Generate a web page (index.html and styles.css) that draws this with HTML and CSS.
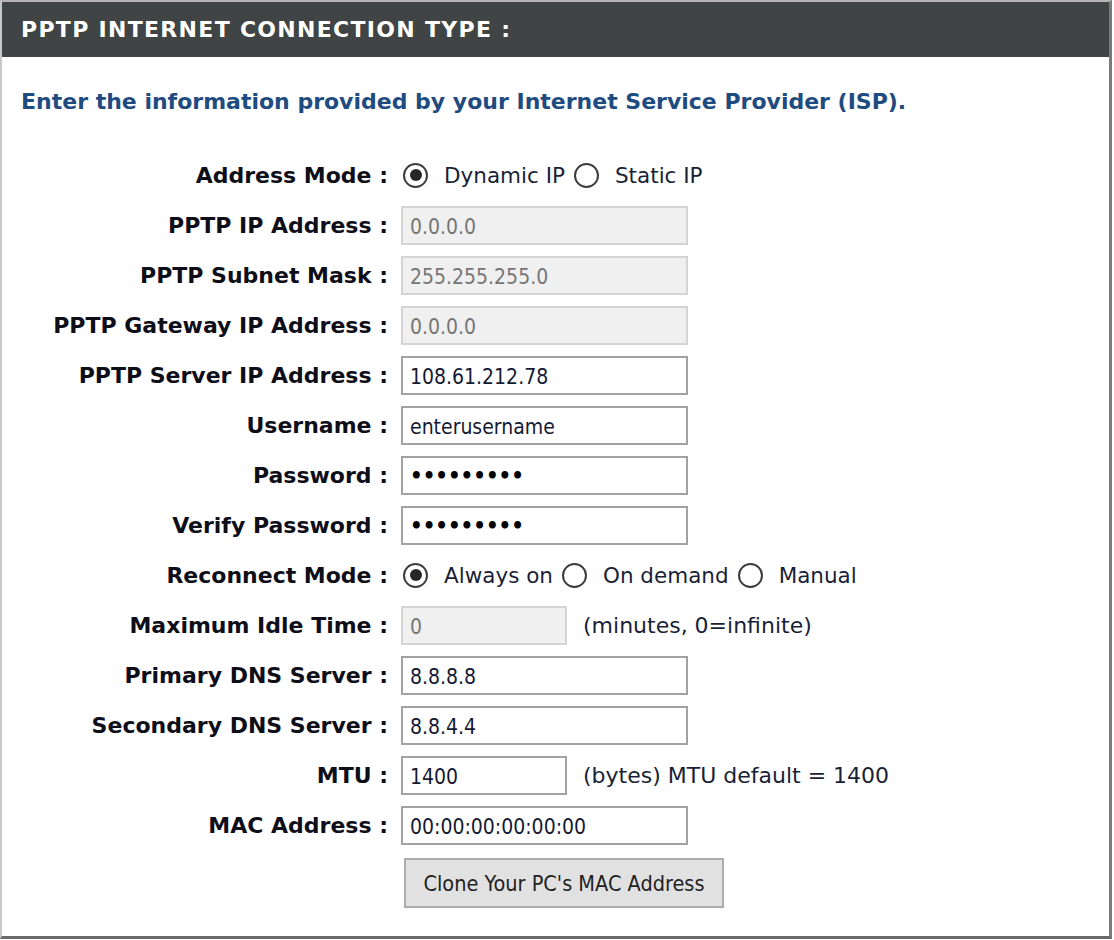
FILE: index.html
```html
<!DOCTYPE html>
<html>
<head>
<meta charset="utf-8">
<link rel="stylesheet" href="styles.css">
</head>
<body>
<div class="box">
  <div class="box-head">PPTP INTERNET CONNECTION TYPE :</div>
  <p class="intro">Enter the information provided by your Internet Service Provider (ISP).</p>
  <div class="form">
    <div class="lbl">Address Mode :</div>
    <div class="fld radios">
      <label class="opt"><span class="radio on"></span>Dynamic IP</label>
      <label class="opt"><span class="radio"></span>Static IP</label>
    </div>

    <div class="lbl">PPTP IP Address :</div>
    <div class="fld"><input class="txt" type="text" value="0.0.0.0" disabled></div>

    <div class="lbl">PPTP Subnet Mask :</div>
    <div class="fld"><input class="txt" type="text" value="255.255.255.0" disabled></div>

    <div class="lbl">PPTP Gateway IP Address :</div>
    <div class="fld"><input class="txt" type="text" value="0.0.0.0" disabled></div>

    <div class="lbl">PPTP Server IP Address :</div>
    <div class="fld"><input class="txt" type="text" value="108.61.212.78"></div>

    <div class="lbl">Username :</div>
    <div class="fld"><input class="txt" type="text" value="enterusername"></div>

    <div class="lbl">Password :</div>
    <div class="fld"><input class="txt pw" type="password" value="password1"></div>

    <div class="lbl">Verify Password :</div>
    <div class="fld"><input class="txt pw" type="password" value="password1"></div>

    <div class="lbl">Reconnect Mode :</div>
    <div class="fld radios">
      <label class="opt"><span class="radio on"></span>Always on</label>
      <label class="opt"><span class="radio"></span>On demand</label>
      <label class="opt"><span class="radio"></span>Manual</label>
    </div>

    <div class="lbl">Maximum Idle Time :</div>
    <div class="fld"><input class="txt short" type="text" value="0" disabled><span class="note">(minutes, 0=infinite)</span></div>

    <div class="lbl">Primary DNS Server :</div>
    <div class="fld"><input class="txt" type="text" value="8.8.8.8"></div>

    <div class="lbl">Secondary DNS Server :</div>
    <div class="fld"><input class="txt" type="text" value="8.8.4.4"></div>

    <div class="lbl">MTU :</div>
    <div class="fld"><input class="txt short" type="text" value="1400"><span class="note">(bytes) MTU default = 1400</span></div>

    <div class="lbl">MAC Address :</div>
    <div class="fld"><input class="txt" type="text" value="00:00:00:00:00:00"></div>

    <div class="lbl"></div>
    <div class="fld btnrow"><button class="btn" type="button">Clone Your PC's MAC Address</button></div>
  </div>
</div>
</body>
</html>
```

FILE: styles.css
```css
html, body {
  margin: 0;
  padding: 0;
  background: #ffffff;
}

body {
  font-family: "DejaVu Sans", sans-serif;
}

.box {
  width: 1107px;
  height: 934px;
  border-top: 2px solid #b4b4b4;
  border-left: 2px solid #c8c8c8;
  border-right: 3px solid #7a7a7a;
  border-bottom: 3px solid #6a6a6a;
  background: #ffffff;
}

.box-head {
  background: #404444;
  color: #ffffff;
  font-weight: bold;
  font-size: 22px;
  letter-spacing: 1.3px;
  height: 55px;
  line-height: 56px;
  padding-left: 19px;
}

.intro {
  margin: 0;
  padding: 32px 0 0 19px;
  height: 61px;
  color: #1f4c80;
  font-weight: bold;
  font-size: 22px;
  line-height: 26px;
}

.form {
  display: grid;
  grid-template-columns: 386px 1fr;
  grid-auto-rows: 50px;
  column-gap: 13px;
}

.lbl {
  font-weight: bold;
  font-size: 22px;
  color: #0e0e18;
  display: flex;
  align-items: center;
  justify-content: flex-end;
}

.fld {
  display: flex;
  align-items: center;
}

.radios {
  font-size: 21.5px;
  color: #1a1f38;
}

.opt {
  display: flex;
  align-items: center;
  margin-right: 9px;
}

.radio {
  box-sizing: border-box;
  width: 25px;
  height: 25px;
  border: 2px solid #3c3c3c;
  border-radius: 50%;
  margin: 0 16px 0 2px;
  display: inline-flex;
  align-items: center;
  justify-content: center;
  background: #ffffff;
}

.opt + .opt .radio {
  margin-left: 0;
}

.radio.on::after {
  content: "";
  width: 12px;
  height: 12px;
  border-radius: 50%;
  background: #262626;
}

.txt {
  box-sizing: border-box;
  width: 287px;
  height: 39px;
  margin: 0;
  border: 2px solid #a2a2a2;
  background: #ffffff;
  padding: 3px 6px 0 7px;
  font-family: "DejaVu Sans Condensed", "DejaVu Sans", sans-serif;
  font-stretch: condensed;
  font-size: 21px;
  color: #151a33;
  outline: none;
}

.txt:disabled {
  background: #f0f0f0;
  border-color: #d4d4d4;
  color: #767676;
}

.txt.short {
  width: 166px;
}

.pw {
  font-size: 22px;
  font-weight: bold;
  color: #000000;
  padding-top: 0;
}

.note {
  margin-left: 16px;
  font-size: 22px;
  color: #1a1f38;
}

.btnrow {
  align-items: flex-start;
}

.btn {
  box-sizing: border-box;
  margin-left: 3px;
  margin-top: 8px;
  width: 320px;
  height: 50px;
  background: #e1e1e1;
  border: 2px solid #adadad;
  border-radius: 0;
  font-family: "DejaVu Sans Condensed", "DejaVu Sans", sans-serif;
  font-stretch: condensed;
  font-size: 21.5px;
  color: #222222;
  padding: 0;
}
```
